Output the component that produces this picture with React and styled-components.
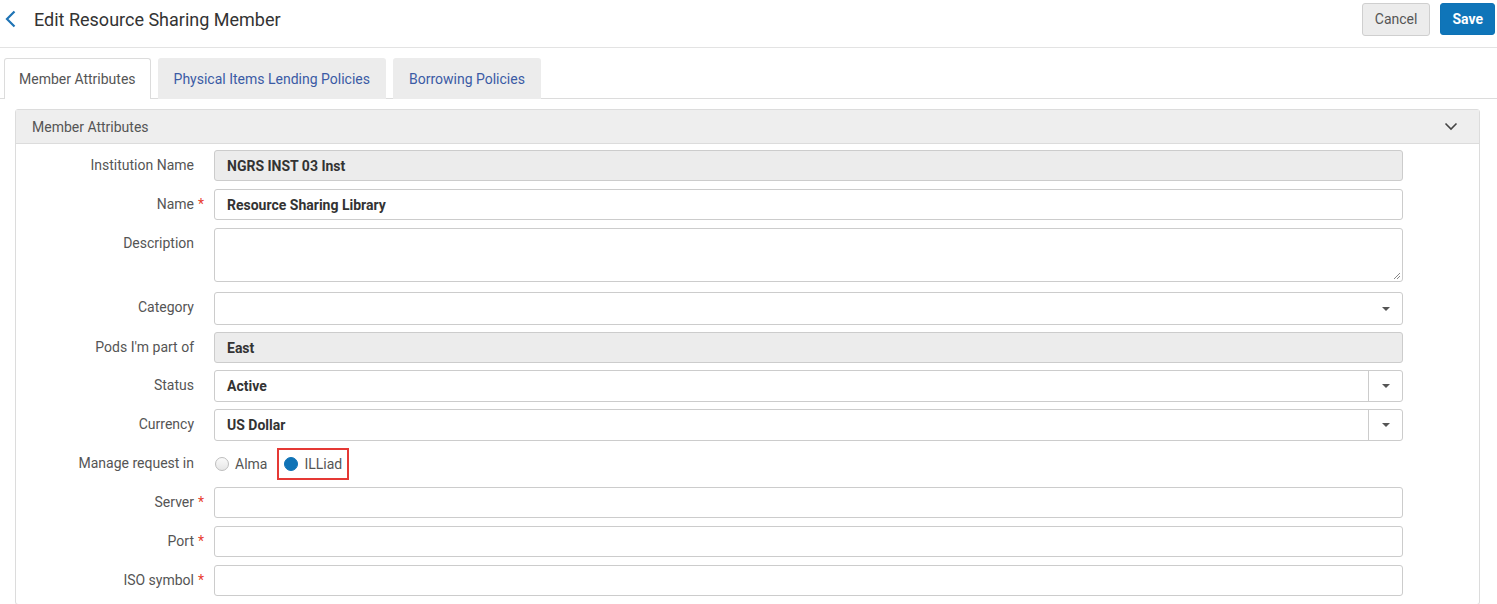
import React from 'react'
import styled, { createGlobalStyle } from 'styled-components'

const GlobalStyle = createGlobalStyle`
    body {
        margin: 0;
        background: #fff;
        font-family: Roboto, "Liberation Sans", sans-serif;
        color: #555;
    }
`

const Header = styled.div`
    display: flex;
    align-items: center;
    justify-content: space-between;
    height: 48px;
    box-sizing: border-box;
    padding: 3px 2px 12px 5px;
    border-bottom: 1px solid #e3e3e3;
`

const TitleGroup = styled.div`
    display: flex;
    align-items: center;
    gap: 17px;
`

const Title = styled.h1`
    margin: 0;
    font-size: 18px;
    font-weight: 400;
    color: #333;
`

const Actions = styled.div`
    display: flex;
    gap: 10px;
`

const Button = styled.button`
    height: ${p => (p.$primary ? '32px' : '33px')};
    padding: 0 ${p => (p.$primary ? '11px' : '12px')};
    border-radius: 3px;
    border: 1px solid ${p => (p.$primary ? '#0e72b5' : '#cfcfcf')};
    background: ${p => (p.$primary ? '#0f75b9' : '#ececec')};
    color: ${p => (p.$primary ? '#fff' : '#555')};
    font-family: Roboto, sans-serif;
    font-size: 14px;
    font-weight: ${p => (p.$primary ? 700 : 400)};
`

const Tabs = styled.div`
    display: flex;
    gap: 7px;
    margin-top: 10px;
    padding-left: 4px;
    border-bottom: 1px solid #dcdcdc;
`

const Tab = styled.div`
    height: 41px;
    box-sizing: border-box;
    display: flex;
    align-items: center;
    padding: 0 ${p => (p.$active ? '14px' : '15px')};
    font-size: 14px;
    color: ${p => (p.$active ? '#555' : '#3b5ba5')};
    background: ${p => (p.$active ? '#fff' : '#ececec')};
    border: 1px solid ${p => (p.$active ? '#dcdcdc' : '#ececec')};
    border-bottom: none;
    border-radius: 3px 3px 0 0;
    margin-bottom: -1px;
`

const Panel = styled.div`
    margin: 10px 17px 0 15px;
    border: 1px solid #dcdcdc;
    border-radius: 3px;
`

const PanelHeader = styled.div`
    display: flex;
    align-items: center;
    justify-content: space-between;
    height: 33px;
    padding: 0 21px 0 16px;
    background: #eeeeee;
    border-bottom: 1px solid #dcdcdc;
    font-size: 14px;
    color: #555;
`

const Form = styled.div`
    padding: 6px 76px 0 0;
`

const Row = styled.div`
    display: grid;
    grid-template-columns: 188px 1fr;
    column-gap: 10px;
    margin-bottom: ${p => p.$gap || 8}px;
`

const Label = styled.div`
    display: flex;
    justify-content: flex-end;
    line-height: 31px;
    font-size: 14px;
    color: #555;
    white-space: nowrap;
`

const Star = styled.span`
    display: inline-block;
    width: 10px;
    text-align: right;
    color: #e8402f;
`

const Field = styled.div`
    position: relative;
    display: flex;
    align-items: center;
    height: ${p => p.$h || 31}px;
    box-sizing: border-box;
    padding-left: 12px;
    border: 1px solid #cccccc;
    border-radius: 3px;
    background: ${p => (p.$readOnly ? '#ececec' : '#fff')};
    font-size: 14px;
    font-weight: 700;
    color: #333;
`

const Grip = styled.svg`
    position: absolute;
    right: 1px;
    bottom: 1px;
`

const Addon = styled.div`
    margin-left: auto;
    align-self: stretch;
    width: 33px;
    display: flex;
    align-items: center;
    justify-content: center;
    border-left: 1px solid ${p => (p.$split ? '#cccccc' : 'transparent')};
`

const Caret = styled.span`
    width: 0;
    height: 0;
    border-left: 4px solid transparent;
    border-right: 4px solid transparent;
    border-top: 4px solid #555;
`

const Radios = styled.div`
    display: flex;
    align-items: center;
    height: 31px;
    font-size: 14px;
    color: #555;
`

const RadioOption = styled.label`
    display: flex;
    align-items: center;
    gap: 6px;
    height: 28px;
    padding: 0 ${p => (p.$marked ? '5px' : '0')};
    margin-left: ${p => (p.$marked ? '10px' : '1px')};
    border: ${p => (p.$marked ? '2px solid #e53935' : 'none')};
`

const Dot = styled.span`
    width: 14px;
    height: 14px;
    border-radius: 50%;
    box-sizing: border-box;
    background: ${p => (p.$on ? '#0f73b6' : 'linear-gradient(#fafafa, #e6e6e6)')};
    border: 1px solid ${p => (p.$on ? '#0f73b6' : '#bdbdbd')};
`

const Select = ({ value, split }) => (
    <Field $h={split ? 32 : 33}>
        {value}
        <Addon $split={split}><Caret /></Addon>
    </Field>
)

const FormRow = ({ label, required, gap, children }) => (
    <Row $gap={gap}>
        <Label>{label}<Star>{required ? '*' : ''}</Star></Label>
        {children}
    </Row>
)

export default function App() {
    return (
        <>
            <GlobalStyle />
            <Header>
                <TitleGroup>
                    <svg width="12" height="18" viewBox="0 0 12 18">
                        <polyline points="9.5,1.5 2,9 9.5,16.5" fill="none" stroke="#1f74b5" strokeWidth="2.2" />
                    </svg>
                    <Title>Edit Resource Sharing Member</Title>
                </TitleGroup>
                <Actions>
                    <Button>Cancel</Button>
                    <Button $primary>Save</Button>
                </Actions>
            </Header>

            <Tabs>
                <Tab $active>Member Attributes</Tab>
                <Tab>Physical Items Lending Policies</Tab>
                <Tab>Borrowing Policies</Tab>
            </Tabs>

            <Panel>
                <PanelHeader>
                    Member Attributes
                    <svg width="14" height="9" viewBox="0 0 14 9">
                        <polyline points="1.5,1.5 7,7 12.5,1.5" fill="none" stroke="#444" strokeWidth="1.6" />
                    </svg>
                </PanelHeader>
                <Form>
                    <FormRow label="Institution Name">
                        <Field $readOnly>NGRS INST 03 Inst</Field>
                    </FormRow>
                    <FormRow label="Name" required>
                        <Field>Resource Sharing Library</Field>
                    </FormRow>
                    <FormRow label="Description" gap={10}>
                        <Field $h={54}>
                            <Grip width="9" height="9" viewBox="0 0 9 9">
                                <path d="M8 2 L2 8 M8 5 L5 8" stroke="#888" strokeWidth="1" />
                            </Grip>
                        </Field>
                    </FormRow>
                    <FormRow label="Category" gap={7}>
                        <Select />
                    </FormRow>
                    <FormRow label="Pods I'm part of" gap={7}>
                        <Field $readOnly>East</Field>
                    </FormRow>
                    <FormRow label="Status" gap={7}>
                        <Select value="Active" split />
                    </FormRow>
                    <FormRow label="Currency" gap={7}>
                        <Select value="US Dollar" split />
                    </FormRow>
                    <FormRow label="Manage request in">
                        <Radios>
                            <RadioOption><Dot />Alma</RadioOption>
                            <RadioOption $marked><Dot $on />ILLiad</RadioOption>
                        </Radios>
                    </FormRow>
                    <FormRow label="Server" required>
                        <Field />
                    </FormRow>
                    <FormRow label="Port" required>
                        <Field />
                    </FormRow>
                    <FormRow label="ISO symbol" required>
                        <Field />
                    </FormRow>
                </Form>
            </Panel>
        </>
    )
}
